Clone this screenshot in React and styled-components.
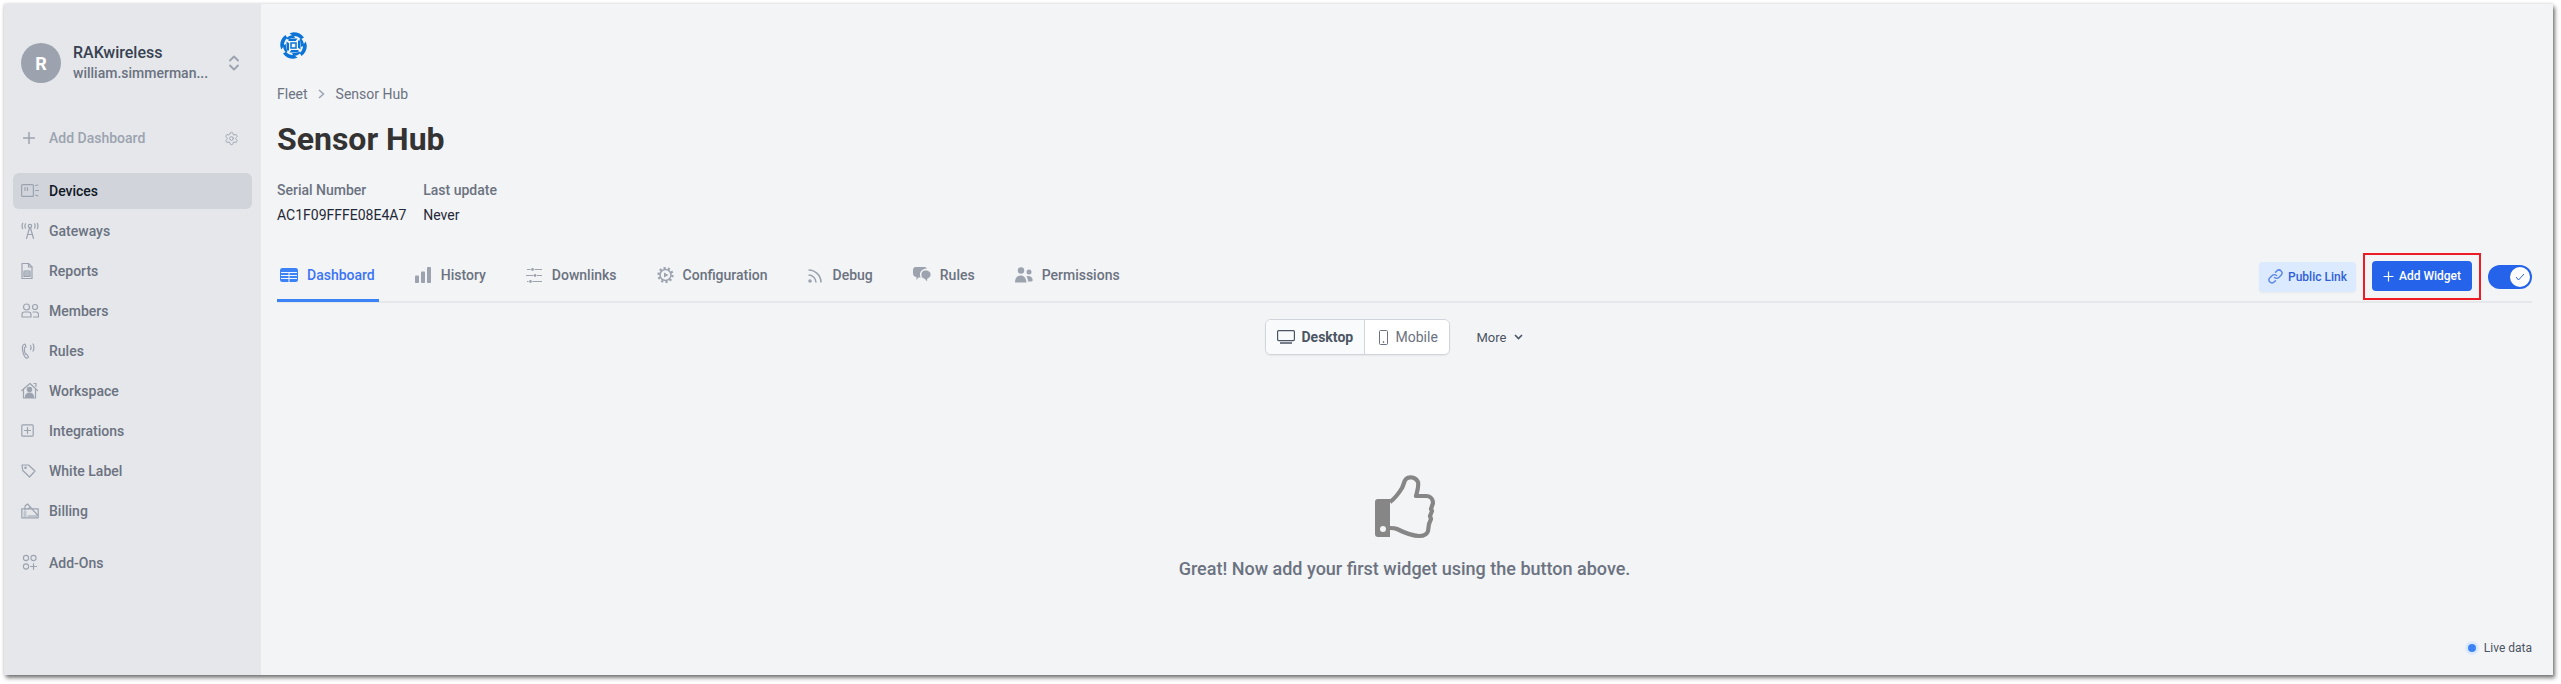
import React from "react";
import styled, { createGlobalStyle } from "styled-components";
import { Settings } from "lucide-react";

const Global = createGlobalStyle`
  html, body { margin: 0; padding: 0; background: #fff; }
  body { font-family: Roboto, "Liberation Sans", sans-serif; width: 2561px; height: 684px; overflow: hidden; }
  #root { padding: 4px 8px 9px 4px; box-sizing: border-box; height: 684px; }
  * { box-sizing: border-box; }
`;

const Frame = styled.div`
  display: flex; width: 2549px; height: 671px; background: #f3f4f6;
  box-shadow: 0 0 3px rgba(0,0,0,.18), 2px 3px 4px rgba(0,0,0,.5);
`;
const Sidebar = styled.aside`
  width: 257px; flex: none; background: #e5e7eb; display: flex; flex-direction: column; padding: 39px 9px 0;
`;
const Account = styled.div`display: flex; align-items: center; padding: 0 8px; height: 40px;`;
const Avatar = styled.div`
  width: 40px; height: 40px; border-radius: 50%; background: #9ca3af; color: #fff; font-weight: 700; font-size: 18px;
  display: flex; align-items: center; justify-content: center; flex: none;
`;
const AccountText = styled.div`margin-left: 12px; width: 140px; display: flex; flex-direction: column;`;
const AccountName = styled.div`font-size: 16px; font-weight: 500; line-height: 21px; color: #374151;`;
const AccountMail = styled.div`font-size: 14px; font-weight: 500; line-height: 21px; color: #6b7280; white-space: nowrap;`;
const Chevrons = styled.svg`margin-left: 16px; color: #9ca3af; flex: none;`;
const AddRow = styled.div`display: flex; align-items: center; height: 20px; margin: 45px 0 25px; padding: 0 13px 0 10px; color: #9ca3af; font-size: 14px; font-weight: 500;`;
const AddLabel = styled.span`margin-left: 14px; flex: 1;`;
const Nav = styled.nav`display: flex; flex-direction: column; gap: 4px;`;
const NavItem = styled.div`
  height: 36px; display: flex; align-items: center; gap: 10px; padding-left: 8px; border-radius: 6px;
  font-size: 14px; font-weight: 500; margin-top: ${p => p.$top || 0}px;
  background: ${p => (p.$active ? "#d1d5db" : "transparent")};
  color: ${p => (p.$active ? "#111827" : "#6b7280")};
  svg { color: #9ca3af; flex: none; }
`;
const Main = styled.main`flex: 1; min-width: 0; display: flex; flex-direction: column; padding: 28px 21px 0 16px;`;
const Logo = styled.svg`display: block; margin-left: 3px; flex: none;`;
const Crumbs = styled.div`display: flex; align-items: center; margin-top: 25px; height: 20px; font-size: 14px; color: #6b7280; gap: 10.5px;`;
const Title = styled.h1`margin: 16px 0 0; font-size: 32px; line-height: 38px; font-weight: 700; color: #333;`;
const Meta = styled.div`display: flex; gap: 17px; margin-top: 22px;`;
const MetaCol = styled.div`display: flex; flex-direction: column; gap: 5px;`;
const MetaLabel = styled.div`font-size: 14px; font-weight: 500; line-height: 20px; color: #6b7280;`;
const MetaValue = styled.div`font-size: 14px; line-height: 20px; color: #1f2937;`;
const TabBar = styled.div`display: flex; align-items: center; height: 65px; margin-top: 13px; padding-top: 11px; border-bottom: 2px solid #e5e7eb;`;
const Tabs = styled.div`display: flex; gap: 33px; flex: 1; align-self: stretch;`;
const Tab = styled.div`
  display: flex; align-items: center; gap: 9px; padding: 0 4px 0 3px; font-size: 14px; font-weight: 500;
  color: ${p => (p.$active ? "#3b74f6" : "#6b7280")};
  position: relative;
  svg { flex: none; color: ${p => (p.$active ? "#3b82f6" : "#9ca3af")}; }
  &::after { content: ""; position: absolute; left: 0; right: 0; bottom: -1px; height: 3px; background: ${p => (p.$active ? "#3b82f6" : "transparent")}; }
`;
const Actions = styled.div`display: flex; align-items: center; margin-top: 3px;`;
const SoftButton = styled.div`
  height: 30px; width: 97px; display: flex; align-items: center; justify-content: center; gap: 5px; border-radius: 4px;
  background: #dbeafe; color: #2f5fd8; font-size: 12px; font-weight: 500; box-shadow: 0 1px 2px rgba(0,0,0,.05);
  svg { color: #5b86e8; }
`;
const Marked = styled.div`margin-left: 7px; border: 2px solid #ed1c24; padding: 6px 7px; height: 47px; width: 118px;`;
const PrimaryButton = styled.div`
  height: 30px; width: 100px; display: flex; align-items: center; justify-content: center; gap: 5px; border-radius: 4px;
  background: #2563eb; color: #fff; font-size: 12px; font-weight: 500;
`;
const Toggle = styled.div`
  margin-left: 7px; width: 44px; height: 24px; border-radius: 12px; background: #2563eb; display: flex; align-items: center; justify-content: flex-end; padding-right: 2px;
`;
const Knob = styled.div`width: 20px; height: 20px; border-radius: 50%; background: #fff; display: flex; align-items: center; justify-content: center;`;
const ViewRow = styled.div`display: flex; align-items: center; justify-content: center; margin-top: 16px; height: 36px; padding-right: 21px;`;
const Segment = styled.div`display: flex; height: 36px; border: 1px solid #d1d5db; border-radius: 6px; background: #fff; box-shadow: 0 1px 2px rgba(0,0,0,.06); overflow: hidden;`;
const SegItem = styled.div`
  display: flex; align-items: center; gap: 7px; padding-left: ${p => (p.$active ? 11 : 14)}px; font-size: 14px;
  width: ${p => (p.$active ? 99 : 84)}px;
  font-weight: ${p => (p.$active ? 700 : 400)};
  color: ${p => (p.$active ? "#4b5563" : "#6b7280")};
  background: ${p => (p.$active ? "#f9fafb" : "#fff")};
  border-right: ${p => (p.$active ? "1px solid #d1d5db" : "0")};
`;
const More = styled.div`display: flex; align-items: center; gap: 8px; margin-left: 27px; font-size: 13px; color: #4b5563;`;
const Empty = styled.div`display: flex; flex-direction: column; align-items: center; margin-top: 120px;`;
const EmptyText = styled.div`margin-top: 19px; font-size: 18px; line-height: 22px; font-weight: 500; color: #6b7280;`;
const LiveRow = styled.div`flex: 1; display: flex; align-items: flex-end; justify-content: flex-end; padding-bottom: 19px;`;
const Live = styled.div`display: flex; align-items: center; gap: 8px; font-size: 12px; line-height: 16px; color: #4b5563;`;
const Dot = styled.span`width: 8px; height: 8px; border-radius: 50%; background: #3b82f6; box-shadow: 0 0 0 3px #dbeafe;`;

const Ic = ({ w = 18, h = 18, children, stroke = 1.2 }) => (
  <svg width={w} height={h} viewBox={`0 0 ${w} ${h}`} fill="none" stroke="currentColor" strokeWidth={stroke} strokeLinecap="round" strokeLinejoin="round">{children}</svg>
);

const nav = [
  { label: "Devices", active: true, icon: <Ic><rect x=".6" y="2.600" width="11.800" height="11.800" rx="1" /><path d="M4 5.500v3M6.500 5.500v3M14.500 3.500l2.500-.5M14.500 8.500h3M14.500 13l2.500 1" /></Ic> },
  { label: "Gateways", icon: <Ic><circle cx="9" cy="4" r="1.700" /><path d="M8.500 6 5.500 16.500M9.500 6l3 10.500M6.800 12.500h4.400M4.500 1.800c-.8 1.300-.8 3 0 4.400M13.500 1.800c.8 1.300.8 3 0 4.400M1.700 1.300C.9 3 .9 5 1.700 6.700M16.300 1.300c.8 1.700.8 3.700 0 5.400" /></Ic> },
  { label: "Reports", icon: <Ic><path d="M1 1.500h6.500L11 5v11.500H1z" /><path d="M7.500 1.500V5H11" /><rect x="3" y="9" width="6" height="5.500" /><path d="M3 11h6M3 13h6M5 9v5.500M7 9v5.500" strokeWidth=".8" /></Ic> },
  { label: "Members", icon: <Ic><circle cx="5.500" cy="5" r="3" /><path d="M1 15v-2.500c0-1.500 1-2.500 2.500-2.500h4c1.500 0 2.500 1 2.500 2.500V15z" /><circle cx="14" cy="5" r="2.500" /><path d="M12 10h3c1.500 0 2.500 1 2.500 2.500V15h-5" /></Ic> },
  { label: "Rules", icon: <Ic><path d="M4 2C2 2.500 1 4.500 1.500 7.500 2 11 3.500 15 5 16c1 .5 2 0 2.500-1l-2-3-1 .5C3.500 10 3 7.500 3.500 5.500l1.500-.5z" /><path d="M9.500 3.500c.7 1 .7 3 0 4M12 2c1.200 1.500 1.200 5.500 0 7" /></Ic> },
  { label: "Workspace", icon: <Ic><path d="M.8 8.500 9 1.500l7.500 7" /><path d="M2.500 7.500V16h12V7.500M13 1.500h2v3" /><circle cx="8.500" cy="7.500" r="2.200" fill="currentColor" /><path d="M4.500 15.500c0-3 2-4.500 4-4.500s4 1.500 4 4.500z" fill="currentColor" /></Ic> },
  { label: "Integrations", icon: <Ic><rect x=".8" y="2.800" width="11.400" height="11.400" rx="1" /><path d="M6.500 5.500v6M3.500 8.500h6" /></Ic> },
  { label: "White Label", icon: <Ic><path d="M1 3h6.500l6.500 6-5.500 6L1.800 8.500z" /><circle cx="4.500" cy="5.800" r=".7" /></Ic> },
  { label: "Billing", icon: <Ic><rect x=".8" y="6.800" width="16.400" height="9" /><path d="M4 8V4l2.500-2 10 11M3 10h2M3 12h2M3 14h2M7 14h9M7 7l2.500-2" /></Ic> },
  { label: "Add-Ons", top: 12, icon: <Ic stroke={1.100}><circle cx="5" cy="4" r="2.600" /><circle cx="12.500" cy="4" r="2.600" /><circle cx="5" cy="12.500" r="2.600" /><path d="M12.500 9.500v6M9.500 12.500h6" /></Ic> },
];

const GridIcon = () => (
  <svg width="18" height="14" viewBox="0 0 18 14"><rect width="18" height="14" rx="2.500" fill="currentColor" /><path d="M1 4.500h16M1 7.500h16M1 10.500h16M9 4v10" stroke="#f3f4f6" strokeWidth="1" /></svg>
);
const BarsIcon = () => (
  <svg width="17" height="16" viewBox="0 0 17 16" fill="currentColor"><rect y="8.500" width="4" height="7.500" rx=".8" /><rect x="6" y="4.500" width="4" height="11.500" rx=".8" /><rect x="12" y="0" width="4" height="16" rx=".8" /></svg>
);
const SlidersIcon = () => (
  <svg width="17" height="15" viewBox="0 0 17 15" stroke="currentColor" strokeWidth="1.200" fill="currentColor"><path d="M1 1.500h3.500M8.500 1.500H16M0 7.500h7M11 7.500h5M1 13.500h1.500M6.500 13.500H16" /><circle cx="6.500" cy="1.500" r="1.400" stroke="none" /><circle cx="9" cy="7.500" r="1.400" stroke="none" /><circle cx="4.500" cy="13.500" r="1.400" stroke="none" /></svg>
);
const CogIcon = () => (
  <svg width="17" height="18" viewBox="0 0 17 18" fill="none" stroke="currentColor"><circle cx="8.500" cy="9" r="5.500" strokeWidth="1.500" /><circle cx="8.500" cy="9" r="7" strokeWidth="2.200" strokeDasharray="2.200 2.200" /><path d="M7 6.500 11.500 9 7 11.500z" fill="currentColor" stroke="none" /></svg>
);
const RssIcon = () => (
  <svg width="16" height="15" viewBox="0 0 16 15" fill="none" stroke="currentColor" strokeWidth="1.600"><circle cx="2" cy="13" r="1.800" fill="currentColor" stroke="none" /><path d="M.5 7a7.500 7.500 0 0 1 7.500 7.500M.5 2a12.500 12.500 0 0 1 12.500 12.500" /></svg>
);
const ChatIcon = () => (
  <svg width="18" height="16" viewBox="0 0 18 16" fill="currentColor"><path d="M2.500 0h9c1 0 2 .5 2.500 1.500C10 1.500 7 4 7 7.500c0 1.200.3 2.200.8 3H5.500L3.500 13v-3C1.500 10 0 8.500 0 6.500V3C0 1.500 1 0 2.500 0z" /><path d="M12.500 3c3 0 5.500 2 5.500 4.500 0 2-1.300 3.500-3.200 4.200L14 15l-2.500-3C9 11.700 8 9.800 8 7.500 8 5 10 3 12.500 3z" stroke="#f3f4f6" strokeWidth=".8" /></svg>
);
const PeopleIcon = () => (
  <svg width="18" height="16" viewBox="0 0 18 16" fill="currentColor"><circle cx="6" cy="3.500" r="3.200" /><path d="M0 15.500c0-4 2-7 5.500-7S11 11 11.500 15.500z" /><circle cx="14" cy="5" r="2.500" /><path d="M11.500 9.500c2-1 5-.5 6 2.500.4 1.500 0 2.500-1 2.500h-3.500c0-1.800-.5-3.500-1.500-5z" /></svg>
);
const LinkIcon = () => (
  <Ic w={15} h={15} stroke={1.400}><path d="M6.500 8.500a3 3 0 0 0 4.300 0l2.300-2.300a3 3 0 0 0-4.300-4.300L7.500 3.200" /><path d="M8.500 6.500a3 3 0 0 0-4.300 0L1.900 8.800a3 3 0 0 0 4.300 4.300l1.300-1.300" /></Ic>
);
const blade = "M13.500 .2C18 .2 21.500 2 24 5.500l-3 1.800C19 5 16.500 3.800 13 4L9.500 1.200z";
const RakLogo = () => (
  <Logo width="27" height="27" viewBox="0 0 27 27" fill="#0b74d6">
    {[0, 90, 180, 270].map(r => (
      <g key={r} transform={`rotate(${r} 13.500 13.500)`}>
        <path d={blade} />
        <path d="M19.500 7.500 21 6.500c2 2 3 4.500 3 7l-3 1.500c.3-3-.2-5.500-1.500-7.500z" />
        <path d="M8.500 6.500h9l-1.800 2.500H8.500z" />
      </g>
    ))}
    <rect x="11" y="11" width="5" height="5" fill="none" stroke="#0b74d6" strokeWidth="1.500" />
  </Logo>
);
const ThumbIcon = () => (
  <svg width="60" height="64" viewBox="0 0 60 64">
    <path d="M3 24h12v38H3c-2 0-3-1-3-3V27c0-2 1-3 3-3z" fill="#868686" />
    <circle cx="8" cy="54" r="3" fill="#f3f4f6" />
    <path d="M15 27c4-3 9-9 12-14 2-4 2-7 4-9 3-3 10-2 12 3 1 4-1 10-2 14h10c5 0 7 4 7 7l-2 6 1 2-2 5 1 3-2 5-1 7c-1 4-5 5-9 5-8 0-16-4-22-7-2-1-5-1-7-1" fill="none" stroke="#868686" strokeWidth="4.200" strokeLinejoin="round" />
  </svg>
);

export default function App() {
  return (
    <>
      <Global />
      <Frame>
        <Sidebar>
          <Account>
            <Avatar>R</Avatar>
            <AccountText>
              <AccountName>RAKwireless</AccountName>
              <AccountMail>william.simmerman...</AccountMail>
            </AccountText>
            <Chevrons width="10" height="16" viewBox="0 0 10 16" fill="none" stroke="currentColor" strokeWidth="1.800" strokeLinecap="round" strokeLinejoin="round"><path d="M1 5.500 5 1.500l4 4M1 10.500l4 4 4-4" /></Chevrons>
          </Account>
          <AddRow>
            <Ic w={12} h={12} stroke={1.500}><path d="M6 .5v11M.5 6h11" /></Ic>
            <AddLabel>Add Dashboard</AddLabel>
            <Settings size={15} strokeWidth={1.500} />
          </AddRow>
          <Nav>
            {nav.map(n => (
              <NavItem key={n.label} $active={n.active} $top={n.top}>{n.icon}{n.label}</NavItem>
            ))}
          </Nav>
        </Sidebar>
        <Main>
          <RakLogo />
          <Crumbs>
            <span>Fleet</span>
            <svg width="7" height="10" viewBox="0 0 7 10" fill="none" stroke="#9ca3af" strokeWidth="1.500"><path d="M1 1l4.500 4L1 9" /></svg>
            <span>Sensor Hub</span>
          </Crumbs>
          <Title>Sensor Hub</Title>
          <Meta>
            <MetaCol><MetaLabel>Serial Number</MetaLabel><MetaValue>AC1F09FFFE08E4A7</MetaValue></MetaCol>
            <MetaCol><MetaLabel>Last update</MetaLabel><MetaValue>Never</MetaValue></MetaCol>
          </Meta>
          <TabBar>
            <Tabs>
              <Tab $active><GridIcon />Dashboard</Tab>
              <Tab><BarsIcon />History</Tab>
              <Tab><SlidersIcon />Downlinks</Tab>
              <Tab><CogIcon />Configuration</Tab>
              <Tab><RssIcon />Debug</Tab>
              <Tab><ChatIcon />Rules</Tab>
              <Tab><PeopleIcon />Permissions</Tab>
            </Tabs>
            <Actions>
              <SoftButton><LinkIcon />Public Link</SoftButton>
              <Marked>
                <PrimaryButton>
                  <svg width="11" height="11" viewBox="0 0 11 11" stroke="#fff" strokeWidth="1.200"><path d="M5.500.5v10M.5 5.500h10" /></svg>
                  Add Widget
                </PrimaryButton>
              </Marked>
              <Toggle><Knob><svg width="10" height="8" viewBox="0 0 10 8" fill="none" stroke="#2563eb" strokeWidth="1"><path d="M1 4l2.500 3L9 1" /></svg></Knob></Toggle>
            </Actions>
          </TabBar>
          <ViewRow>
            <Segment>
              <SegItem $active>
                <svg width="18" height="14" viewBox="0 0 18 14" fill="none" stroke="#4b5563" strokeWidth="1.200"><rect x=".6" y=".6" width="16.800" height="10" rx="1" /><path d="M3 13h12" strokeWidth="1.500" /></svg>
                Desktop
              </SegItem>
              <SegItem>
                <svg width="10" height="15" viewBox="0 0 10 15" fill="none" stroke="#6b7280" strokeWidth="1"><rect x=".5" y=".5" width="8" height="14" rx="1" /><circle cx="4.500" cy="12" r=".5" fill="#6b7280" /></svg>
                Mobile
              </SegItem>
            </Segment>
            <More>More
              <svg width="9" height="6" viewBox="0 0 9 6" fill="none" stroke="#4b5563" strokeWidth="1.600"><path d="M1 1l3.500 3.500L8 1" /></svg>
            </More>
          </ViewRow>
          <Empty>
            <ThumbIcon />
            <EmptyText>Great! Now add your first widget using the button above.</EmptyText>
          </Empty>
          <LiveRow><Live><Dot />Live data</Live></LiveRow>
        </Main>
      </Frame>
    </>
  );
}
